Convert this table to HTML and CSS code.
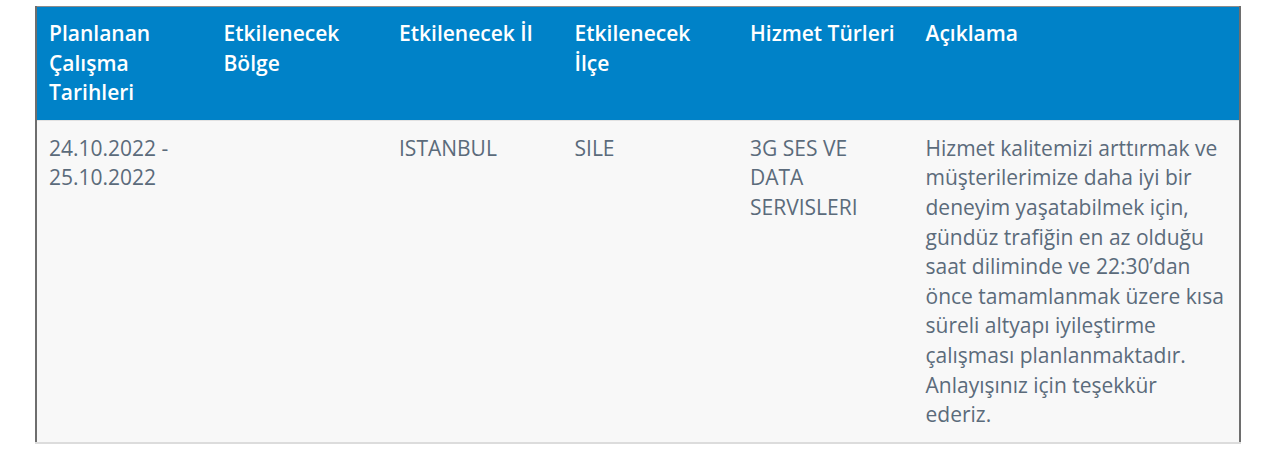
FILE: index.html
```html
<!DOCTYPE html>
<html lang="tr">
<head>
<meta charset="utf-8">
<link rel="stylesheet" href="styles.css">
</head>
<body>
<div class="wrap">
<table class="plan">
  <colgroup>
    <col class="c1"><col class="c2"><col class="c3"><col class="c4"><col class="c5"><col class="c6">
  </colgroup>
  <thead>
    <tr>
      <th>Planlanan Çalışma Tarihleri</th>
      <th>Etkilenecek Bölge</th>
      <th>Etkilenecek İl</th>
      <th>Etkilenecek İlçe</th>
      <th>Hizmet Türleri</th>
      <th>Açıklama</th>
    </tr>
  </thead>
  <tbody>
    <tr>
      <td>24.10.2022 - 25.10.2022</td>
      <td></td>
      <td>ISTANBUL</td>
      <td>SILE</td>
      <td>3G SES VE DATA SERVISLERI</td>
      <td>Hizmet kalitemizi arttırmak ve müşterilerimize daha iyi bir deneyim yaşatabilmek için, gündüz trafiğin en az olduğu saat diliminde ve 22:30’dan önce tamamlanmak üzere kısa süreli altyapı iyileştirme çalışması planlanmaktadır. Anlayışınız için teşekkür ederiz.</td>
    </tr>
  </tbody>
</table>
</div>
</body>
</html>
```

FILE: styles.css
```css
html, body {
  margin: 0;
  padding: 0;
  background: #ffffff;
}
.wrap {
  padding: 6px 40px 0 35px;
}
.plan {
  width: 1206px;
  border-collapse: collapse;
  table-layout: fixed;
  font-family: "Open Sans", Lato, sans-serif;
  font-size: 21px;
  line-height: 29.6px;
  border-top: 1px solid #8c8c8c;
  border-left: 2px solid #6e6e6e;
  border-right: 2px solid #6e6e6e;
}
.c1, .c2, .c3, .c4, .c5 { width: 175.5px; }
.c6 { width: auto; }
.plan th {
  background: #0082c8;
  color: #ffffff;
  font-weight: 600;
  text-align: left;
  vertical-align: top;
  padding: 12px 11px 12px 12px;
}
.plan thead tr {
  border-bottom: 1px solid #e2e2e2;
}
.plan td {
  background: #f8f8f8;
  color: #5b6b7b;
  vertical-align: top;
  padding: 13px 14px 12px 12px;
}
.plan tbody tr {
  border-bottom: 2px solid #dcdcdc;
}
```
